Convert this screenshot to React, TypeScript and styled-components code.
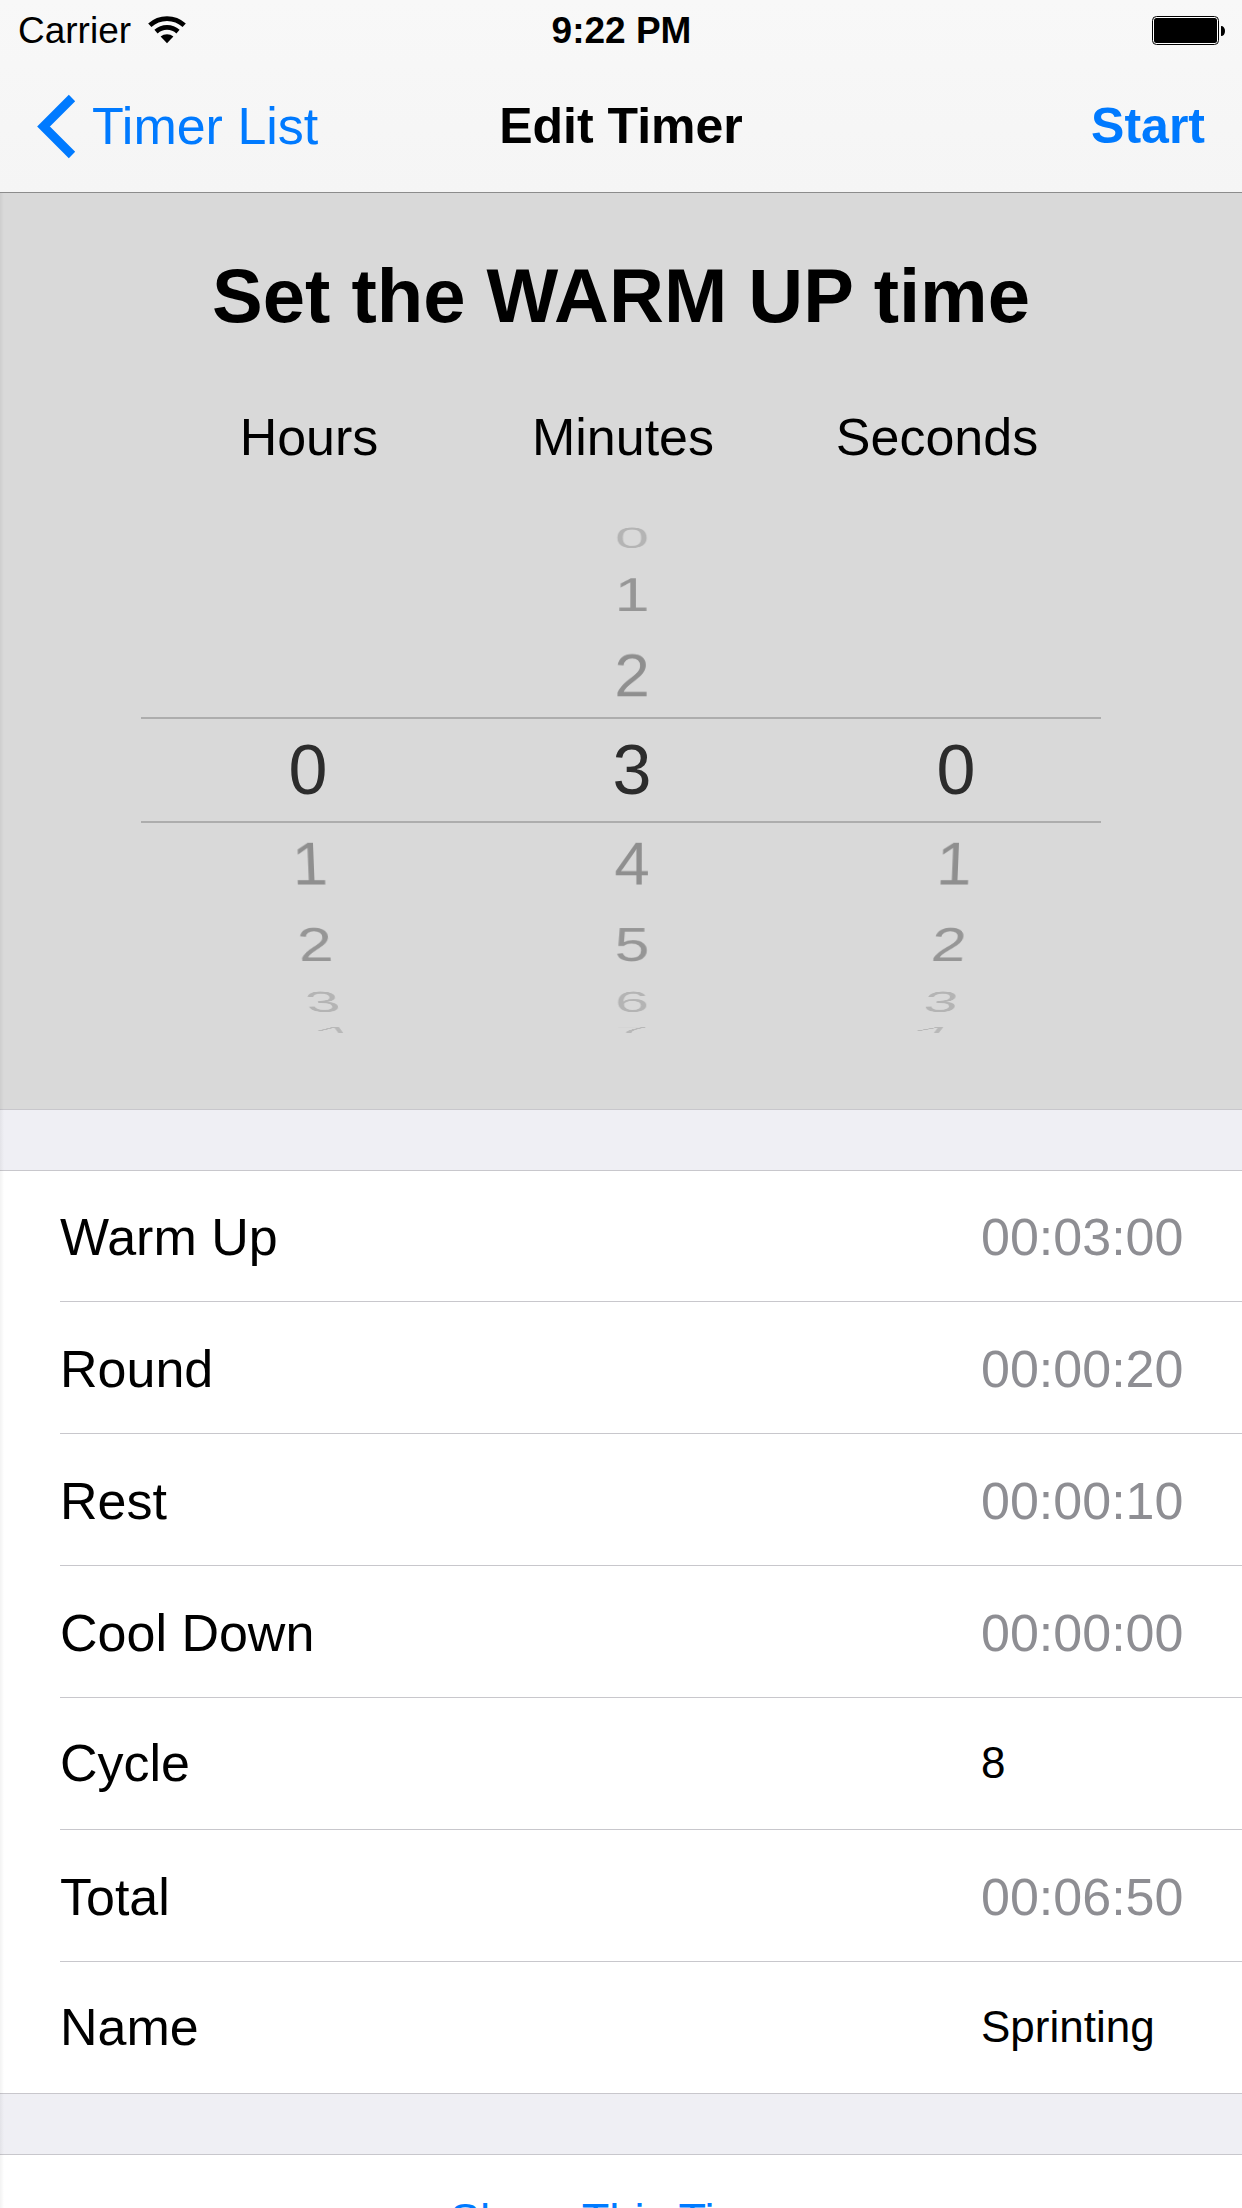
import React, { useState } from "react";
import styled, { createGlobalStyle } from "styled-components";

const color = {
  tint: "#007aff",
  ink: "#000000",
  detail: "#8e8e93",
  line: "#c8c7cc",
  ground: "#efeff4",
  panel: "#d9d9d9",
};

const size = { small: 37, field: 44, action: 45, strong: 50, body: 52, title: 76 };

const GlobalStyle = createGlobalStyle`
  *, *::before, *::after { box-sizing: border-box; }
  body {
    margin: 0;
    font-family: "Liberation Sans", Arial, Helvetica, sans-serif;
    color: ${color.ink};
    background: ${color.ground};
  }
`;

const Screen = styled.div`
  display: flex;
  flex-direction: column;
  height: 100vh;
  overflow: hidden;
`;

const Header = styled.header`
  flex: none;
  background: linear-gradient(#f8f8f8, #f5f5f5);
  border-bottom: 1px solid #8c8c8c;
`;

const StatusBar = styled.div`
  display: grid;
  grid-template-columns: 1fr auto 1fr;
  align-items: center;
  height: 60px;
  padding: 2px 17px 0 18px;
  font-size: ${size.small}px;
  line-height: 44px;
`;

const Carrier = styled.div`
  display: flex;
  align-items: center;
  gap: 17px;
`;

const Clock = styled.time`
  font-weight: 700;
`;

const BatteryIcon = styled.svg`
  justify-self: end;
`;

const NavBar = styled.nav`
  display: grid;
  grid-template-columns: 1fr auto 1fr;
  align-items: center;
  height: 132px;
  padding: 0 37px;
  font-size: ${size.body}px;
  line-height: 60px;
`;

const BackLink = styled.a`
  display: flex;
  align-items: center;
  gap: 16px;
  justify-self: start;
  color: ${color.tint};
  text-decoration: none;
  white-space: nowrap;
`;

const NavTitle = styled.h1`
  margin: 0;
  font-size: ${size.strong}px;
  font-weight: 700;
`;

const PlainButton = styled.button`
  padding: 0;
  border: 0;
  background: none;
  color: ${color.tint};
  font: inherit;
  cursor: pointer;
`;

const StartButton = styled(PlainButton)`
  justify-self: end;
  font-size: ${size.strong}px;
  font-weight: 700;
`;

const Main = styled.main`
  position: relative;
  flex: 1;
  min-height: 0;
  overflow-y: auto;
  scrollbar-width: none;

  &::before {
    content: "";
    position: absolute;
    z-index: 1;
    top: 0;
    left: 0;
    width: 4px;
    height: 100%;
    background: linear-gradient(to right, rgba(0, 0, 0, 0.05), rgba(0, 0, 0, 0));
    pointer-events: none;
  }
`;

const PickerPanel = styled.section`
  padding: 58px 0 69px;
  background: ${color.panel};
  border-bottom: 1px solid ${color.line};
`;

const PanelTitle = styled.h2`
  margin: 0;
  font-size: ${size.title}px;
  font-weight: 700;
  line-height: 90px;
  text-align: center;
`;

const UnitRow = styled.div`
  display: grid;
  grid-template-columns: repeat(3, 1fr);
  margin: 66px 148px 33px 152px;
  font-size: ${size.body}px;
  line-height: 60px;
  text-align: center;
`;

const Picker = styled.div`
  display: grid;
  grid-template: 540px / 1fr;
  align-items: center;
  overflow: hidden;
`;

const SelectionBand = styled.div`
  grid-area: 1 / 1;
  height: 106px;
  margin: 0 141px;
  border: solid #adadad;
  border-width: 2px 0;
`;

const Wheels = styled.div`
  grid-area: 1 / 1;
  display: grid;
  grid-template-columns: repeat(3, 1fr);
  margin: 0 124px 0 146px;
  perspective: 2800px;
`;

/* Each wheel is a drum: its rows sit around a cylinder seen from the front. */
const DRUM_RADIUS = 288;
const DRUM_STEP = 19.2;
const rowShade = ["#2c2c2c", "#8f8f8f", "#969696", "#b4b4b4", "#b8b8b8"];

const Wheel = styled.div`
  display: grid;
  justify-items: center;
  transform-style: preserve-3d;
`;

const WheelRow = styled.label<{ $distance: number }>`
  grid-area: 1 / 1;
  width: 200px;
  font-size: ${(p) => (p.$distance === 0 ? 70 : 64)}px;
  line-height: 96px;
  text-align: center;
  color: ${(p) => rowShade[Math.abs(p.$distance)]};
  transform: translateZ(-${DRUM_RADIUS}px)
    rotateX(${(p) => -p.$distance * DRUM_STEP}deg) translateZ(${DRUM_RADIUS}px);
  cursor: pointer;
`;

const WheelRadio = styled.input`
  appearance: none;
  width: 0;
  height: 0;
  margin: 0;
`;

const Settings = styled.ul`
  margin: 60px 0;
  padding: 0 0 0 60px;
  list-style: none;
  background: #ffffff;
  border: solid ${color.line};
  border-width: 1px 0;
`;

const SettingRow = styled.li<{ $editable?: boolean }>`
  display: flex;
  align-items: center;
  justify-content: space-between;
  height: 132px;
  padding: ${(p) => (p.$editable ? "0 60px 2px 0" : "2px 60px 0 0")};
  border-top: 1px solid ${color.line};
  font-size: ${size.body}px;
  line-height: 60px;

  &:first-child {
    height: 130px;
    border-top: 0;
  }
`;

const SettingValue = styled.span`
  width: 201px;
  color: ${color.detail};
  white-space: nowrap;
`;

const SettingInput = styled.input`
  width: 201px;
  height: 60px;
  padding: 0;
  border: 0;
  outline: 0;
  background: none;
  color: ${color.ink};
  font: inherit;
  font-size: ${size.field}px;
`;

const Actions = styled.div`
  background: #ffffff;
  border: solid ${color.line};
  border-width: 1px 0;
`;

const ActionButton = styled(PlainButton)`
  display: block;
  width: 100%;
  height: 130px;
  font-size: ${size.action}px;
`;

const two = (n: number) => String(n).padStart(2, "0");
const clock = (seconds: number) =>
  `${two(Math.floor(seconds / 3600))}:${two(Math.floor(seconds / 60) % 60)}:${two(seconds % 60)}`;

const units = [
  { name: "Hours", count: 24 },
  { name: "Minutes", count: 60 },
  { name: "Seconds", count: 60 },
];

function NumberWheel(props: {
  name: string;
  count: number;
  value: number;
  onChange: (value: number) => void;
}) {
  const { name, count, value, onChange } = props;
  const rows = Array.from({ length: count }, (_, n) => n).filter(
    (n) => Math.abs(n - value) <= 4
  );
  return (
    <Wheel role="radiogroup" aria-labelledby={`unit-${name}`}>
      {rows.map((n) => (
        <WheelRow key={n} $distance={n - value}>
          <WheelRadio
            type="radio"
            name={name}
            checked={n === value}
            onChange={() => onChange(n)}
          />
          {n}
        </WheelRow>
      ))}
    </Wheel>
  );
}

export default function App() {
  const [time, setTime] = useState([0, 3, 0]);
  const [cycles, setCycles] = useState("8");
  const [name, setName] = useState("Sprinting");

  const warmUp = time[0] * 3600 + time[1] * 60 + time[2];
  const round = 20;
  const rest = 10;
  const coolDown = 0;
  const laps = Number(cycles) || 0;
  const total = warmUp + laps * round + Math.max(laps - 1, 0) * rest + coolDown;

  return (
    <>
      <GlobalStyle />
      <Screen>
        <Header>
          <StatusBar>
            <Carrier>
              Carrier
              <svg width="38" height="30" viewBox="0 0 38 30" aria-label="Wi-Fi">
                <g fill="none" stroke="#000" strokeWidth="4.8">
                  <path d="M1.8 9.2A25.5 25.5 0 0 1 36.2 9.2" />
                  <path d="M8 15.6A16.5 16.5 0 0 1 30 15.6" />
                </g>
                <path d="M19 27.2L12.6 20.6A9.6 9.6 0 0 1 25.4 20.6Z" />
              </svg>
            </Carrier>
            <Clock>9:22 PM</Clock>
            <BatteryIcon width="73" height="30" viewBox="0 0 73 30" aria-label="Battery full">
              <rect x="0.5" y="0.5" width="66" height="28" rx="4" fill="#fff" stroke="#000" />
              <rect x="2" y="2" width="63" height="25" rx="2.5" />
              <path d="M69 10C71.500 10 73 12 73 15S71.500 20 69 20Z" />
            </BatteryIcon>
          </StatusBar>
          <NavBar>
            <BackLink href="#timers">
              <svg width="39" height="66" viewBox="0 0 39 66" aria-hidden="true">
                <path d="M35 5L6.500 33.500L35 62" fill="none" stroke={color.tint} strokeWidth="9" />
              </svg>
              Timer List
            </BackLink>
            <NavTitle>Edit Timer</NavTitle>
            <StartButton type="button">Start</StartButton>
          </NavBar>
        </Header>

        <Main>
          <PickerPanel>
            <PanelTitle>Set the WARM UP time</PanelTitle>
            <UnitRow>
              {units.map((unit) => (
                <span key={unit.name} id={`unit-${unit.name}`}>
                  {unit.name}
                </span>
              ))}
            </UnitRow>
            <Picker>
              <SelectionBand />
              <Wheels>
                {units.map((unit, i) => (
                  <NumberWheel
                    key={unit.name}
                    name={unit.name}
                    count={unit.count}
                    value={time[i]}
                    onChange={(n) => setTime(time.map((t, k) => (k === i ? n : t)))}
                  />
                ))}
              </Wheels>
            </Picker>
          </PickerPanel>

          <Settings>
            <SettingRow>
              Warm Up<SettingValue>{clock(warmUp)}</SettingValue>
            </SettingRow>
            <SettingRow>
              Round<SettingValue>{clock(round)}</SettingValue>
            </SettingRow>
            <SettingRow>
              Rest<SettingValue>{clock(rest)}</SettingValue>
            </SettingRow>
            <SettingRow>
              Cool Down<SettingValue>{clock(coolDown)}</SettingValue>
            </SettingRow>
            <SettingRow $editable>
              <label htmlFor="cycle">Cycle</label>
              <SettingInput
                id="cycle"
                inputMode="numeric"
                value={cycles}
                onChange={(e) => setCycles(e.target.value)}
              />
            </SettingRow>
            <SettingRow>
              Total<SettingValue>{clock(total)}</SettingValue>
            </SettingRow>
            <SettingRow $editable>
              <label htmlFor="name">Name</label>
              <SettingInput id="name" value={name} onChange={(e) => setName(e.target.value)} />
            </SettingRow>
          </Settings>

          <Actions>
            <ActionButton type="button">Share This Timer</ActionButton>
          </Actions>
        </Main>
      </Screen>
    </>
  );
}
